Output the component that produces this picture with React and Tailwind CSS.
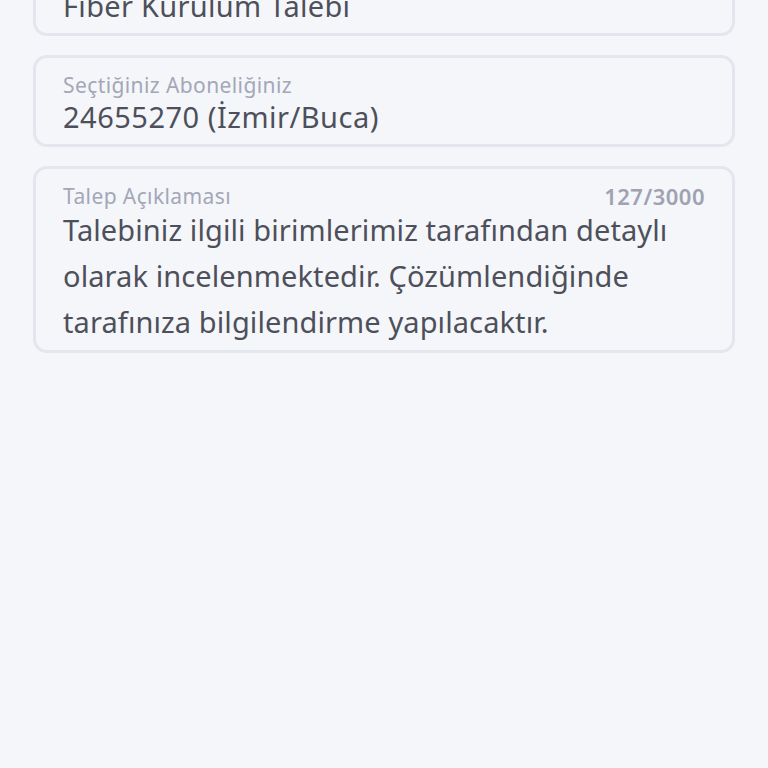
import React from "react";

const Field = ({ label, counter, children, className = "" }) => (
  <div
    className={`rounded-[14px] border-[3px] border-[#e3e6ed] bg-[#f5f6f9] px-[27px] pt-[14px] ${className}`}
  >
    <div className="flex items-center justify-between">
      <span className="text-[21px] leading-[27px] tracking-[0.4px] text-[#a3a7b8]">
        {label}
      </span>
      {counter && (
        <span className="text-[22px] leading-[27px] tracking-[0.5px] font-semibold text-[#9ea2b3]">
          {counter}
        </span>
      )}
    </div>
    {children}
  </div>
);

export default function App() {
  return (
    <div
      className="min-h-[768px] w-full overflow-hidden bg-[#f5f6f9] px-[33px]"
      style={{ fontFamily: "'Noto Sans', sans-serif" }}
    >
      <div className="-mt-[56px] flex flex-col gap-[19px]">
        <Field label="Talep Tipi" className="pb-[9px]">
          <p className="text-[29px] leading-[36px] tracking-[0.3px] text-[#4d505b]">
            Fiber Kurulum Talebi
          </p>
        </Field>
        <Field label="Seçtiğiniz Aboneliğiniz" className="pb-[9px]">
          <p className="text-[29px] leading-[36px] tracking-[0.5px] text-[#4d505b]">
            24655270 (İzmir/Buca)
          </p>
        </Field>
        <Field label="Talep Açıklaması" counter="127/3000" className="pb-[5px]">
          <p className="-mt-[3px] text-[29px] leading-[46px] tracking-[0.1px] text-[#4d505b]">
            Talebiniz ilgili birimlerimiz tarafından detaylı olarak
            incelenmektedir. Çözümlendiğinde tarafınıza bilgilendirme
            yapılacaktır.
          </p>
        </Field>
      </div>
    </div>
  );
}
